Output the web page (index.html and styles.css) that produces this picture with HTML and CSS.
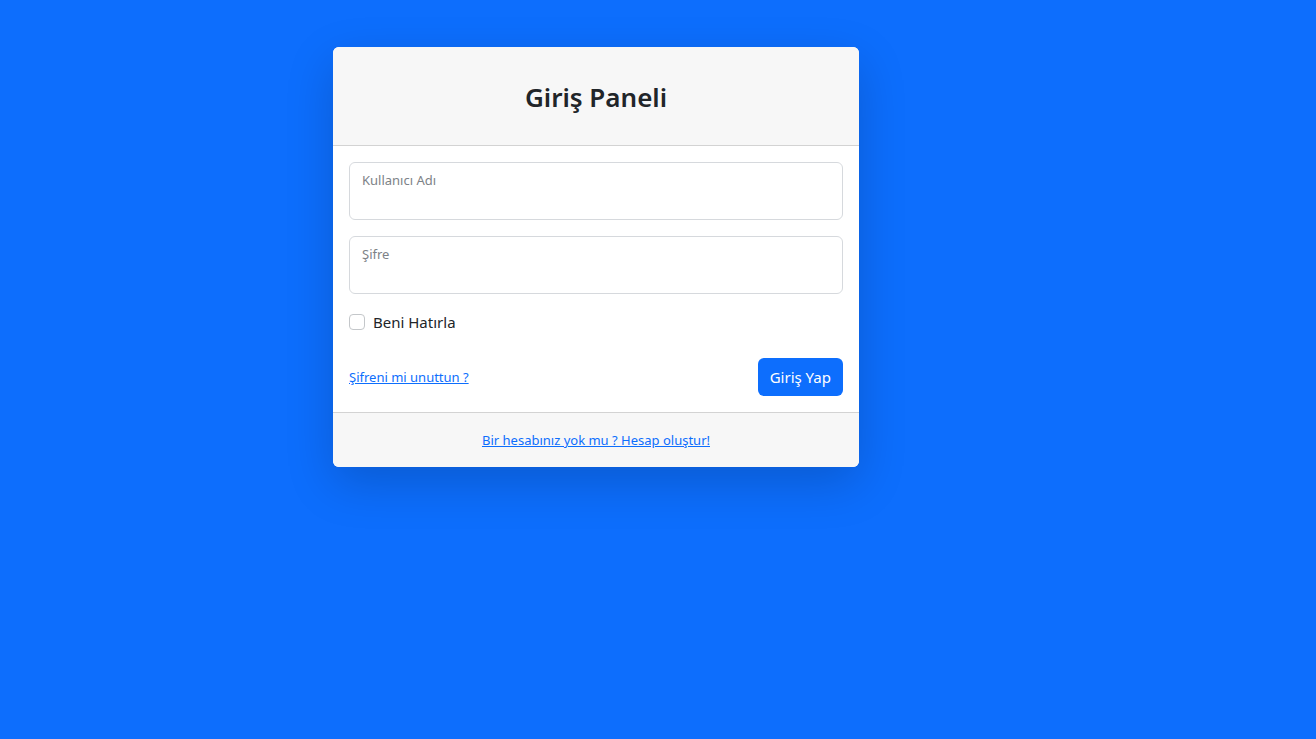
FILE: index.html
```html
<!DOCTYPE html>
<html lang="tr">
<head>
<meta charset="utf-8">
<title>Giriş Paneli</title>
<link rel="stylesheet" href="styles.css">
</head>
<body>
<main class="page">
  <section class="card">
    <header class="card-header">
      <h3 class="title">Giriş Paneli</h3>
    </header>
    <form class="card-body">
      <div class="floating">
        <input class="field" type="text" id="username">
        <label class="floating-label" for="username">Kullanıcı Adı</label>
      </div>
      <div class="floating">
        <input class="field" type="password" id="password">
        <label class="floating-label" for="password">Şifre</label>
      </div>
      <div class="check">
        <span class="check-box"></span>
        <span class="check-label">Beni Hatırla</span>
      </div>
      <div class="actions">
        <a class="link" href="#">Şifreni mi unuttun ?</a>
        <button class="btn" type="button">Giriş Yap</button>
      </div>
    </form>
    <footer class="card-footer">
      <a class="link" href="#">Bir hesabınız yok mu ? Hesap oluştur!</a>
    </footer>
  </section>
</main>
</body>
</html>
```

FILE: styles.css
```css
* { box-sizing: border-box; }
html, body { margin: 0; padding: 0; }
body {
  background: #0d6efd;
  font-family: "Noto Sans", "Open Sans", sans-serif;
  color: #212529;
  font-size: 16px;
  line-height: 1.5;
  min-height: 739px;
}
.page {
  padding: 47px 0 0 333px;
}
.card {
  width: 526px;
  background: #fff;
  border-radius: 6px;
  box-shadow: 0 16px 48px rgba(0, 0, 0, 0.175);
  overflow: hidden;
}
.card-header {
  background: #f7f7f7;
  border-bottom: 1px solid #d3d3d3;
  padding: 33px 16px 31px;
  text-align: center;
}
.title {
  margin: 0;
  font-size: 26px;
  font-weight: 600;
  line-height: 34px;
  color: #212529;
}
.card-body {
  padding: 16px;
  display: flex;
  flex-direction: column;
  margin: 0;
}
.floating {
  position: relative;
  margin-bottom: 16px;
}
.field {
  display: block;
  width: 100%;
  height: 58px;
  border: 1px solid #d6d9dd;
  border-radius: 6px;
  background: #fff;
  font: inherit;
  padding: 26px 12px 8px;
}
.floating-label {
  position: absolute;
  left: 13px;
  top: 9px;
  font-size: 13px;
  line-height: 18px;
  color: #7d8287;
}
.check {
  display: flex;
  align-items: center;
  gap: 8px;
  height: 24px;
}
.check-box {
  width: 16px;
  height: 16px;
  border: 1px solid #c4c7ca;
  border-radius: 4px;
  background: #fff;
}
.check-label {
  font-size: 15px;
}
.actions {
  display: flex;
  justify-content: space-between;
  align-items: center;
  margin-top: 24px;
}
.link {
  color: #0d6efd;
  text-decoration: underline;
  font-size: 13px;
  line-height: 21px;
}
.btn {
  background: #0d6efd;
  color: #fff;
  border: 0;
  border-radius: 6px;
  height: 38px;
  padding: 0 12px;
  font: inherit;
  font-size: 15px;
}
.card-footer {
  background: #f7f7f7;
  border-top: 1px solid #d3d3d3;
  padding: 16px;
  line-height: 21px;
  text-align: center;
}
```
